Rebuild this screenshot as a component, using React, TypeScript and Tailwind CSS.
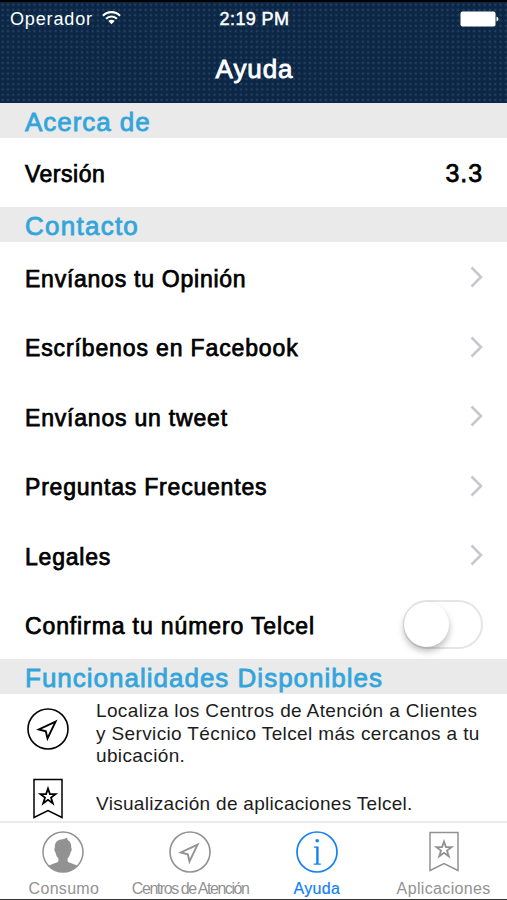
import type { ReactNode } from "react";
import clsx from "clsx";

const contactRows = [
  { label: "Envíanos tu Opinión", className: "tracking-[0.75px]" },
  { label: "Escríbenos en Facebook", className: "tracking-[0.87px]" },
  { label: "Envíanos un tweet", className: "tracking-[0.8px]" },
  { label: "Preguntas Frecuentes", className: "tracking-[0.8px]" },
  { label: "Legales", className: "tracking-[0.8px]" },
];

function SectionHeader({ children, className }: { children: ReactNode; className?: string }) {
  return (
    <h2
      className={clsx(
        "flex shrink-0 items-center bg-[#eaeaea] pl-[25px] text-[26px] leading-none text-[#34a5da] [-webkit-text-stroke:0.8px_#34a5da]",
        className,
      )}
    >
      {children}
    </h2>
  );
}

function Row({ label, className, children }: { label: string; className?: string; children?: ReactNode }) {
  return (
    <div className="flex h-[69.5px] shrink-0 items-center justify-between pr-[24px] pl-[25px] text-[23px] text-black">
      <span className={clsx("pt-[5px] leading-none [-webkit-text-stroke:0.75px_black]", className)}>{label}</span>
      {children}
    </div>
  );
}

function Chevron() {
  return (
    <svg className="mt-px h-[22px] w-[13px]" viewBox="0 0 13 22" fill="none" stroke="#c7c7cc" strokeWidth="2.6">
      <path d="M1.5 1.5 11 11 1.5 20.5" />
    </svg>
  );
}

function LocationIcon() {
  return (
    <svg className="size-[42px]" viewBox="0 0 42 42" fill="none" stroke="currentColor" strokeWidth="1.6">
      <circle cx="21" cy="21" r="20" />
      <path d="M28.6 13.6 11.8 21.5l7 1.8 1.7 7.1z" strokeWidth="1.9" />
    </svg>
  );
}

function BookmarkIcon() {
  return (
    <svg className="h-[42px] w-[30px]" viewBox="0 0 30 42" fill="none" stroke="currentColor" strokeWidth="1.5">
      <path d="M1 1.5h28v38L15 32.5 1 39.5z" />
      <path
        d="M15 10.5l1.9 5.6h5.7l-4.6 3.5 1.8 5.7-4.8-3.5-4.8 3.5 1.8-5.7-4.6-3.5h5.7z"
        strokeWidth="1.8"
      />
    </svg>
  );
}

function PersonIcon() {
  return (
    <svg className="size-[42px]" viewBox="0 0 42 42" fill="none" stroke="currentColor" strokeWidth="1.5">
      <circle cx="21" cy="21" r="20" />
      <path
        d="M12.9 17C12.4 12 15 9 19 8.4c2.300-.3 4.400-.6 6.300-1.900-.3 1.200 0 2 .7 2.700C28.800 10.800 29.500 13.500 29.200 17c.9.6.6 3-.6 4.200-.6 2.800-1.600 4.900-3 6.200V30c0 2.100 6.400 2.400 9.700 5-7.700 7.900-20.900 7.900-28.600 0 3.300-2.600 9.700-2.900 9.700-5v-2.600c-1.400-1.300-2.400-3.400-3-6.200-1.200-1.200-1.500-3.600-.5-4.200z"
        fill="currentColor"
        stroke="none"
      />
    </svg>
  );
}

function InfoIcon() {
  return (
    <svg className="size-[42px]" viewBox="0 0 42 42" fill="none" stroke="currentColor" strokeWidth="1.7">
      <circle cx="21" cy="21" r="20" />
      <circle cx="21.2" cy="9.8" r="1.8" fill="currentColor" stroke="none" />
      <path d="M18 16.2h3.7M17.8 33.2h7" strokeWidth="1.3" />
      <path d="M21.4 15.6v17.4" strokeWidth="2.4" />
    </svg>
  );
}

const tabs = [
  { label: "Consumo", icon: <PersonIcon />, className: "pl-px tracking-[0.3px]" },
  { label: "Centros de Atención", icon: <LocationIcon />, className: "tracking-[-1.45px]" },
  { label: "Ayuda", icon: <InfoIcon />, className: "tracking-[0.3px]", active: true },
  { label: "Aplicaciones", icon: <BookmarkIcon />, className: "tracking-[0.35px]" },
];

function StatusBar() {
  return (
    <div className="grid h-[34px] grid-cols-3 items-center pr-[8px] pl-[10px] text-[18px] leading-none">
      <div className="flex items-center gap-[9px]">
        <span className="tracking-[0.85px]">Operador</span>
        <svg className="-mt-[3px] h-[15px] w-[19px]" viewBox="0 0 20 15" fill="none" stroke="white" strokeWidth="2.2">
          <path d="M1 5.6a12.6 12.6 0 0 1 18 0M4.3 8.9a8 8 0 0 1 11.4 0" />
          <path d="M10 14.5 6.7 11.2a4.7 4.7 0 0 1 6.6 0z" fill="white" stroke="none" />
        </svg>
      </div>
      <span className="text-center tracking-[0.4px] [-webkit-text-stroke:0.5px_white]">2:19 PM</span>
      <svg className="-mt-px h-[16px] w-[39px] justify-self-end" viewBox="0 0 39 16" fill="white">
        <rect x="0.5" y="0.5" width="35" height="15" rx="2" />
        <path d="M36.5 5.5q2 1 2 2.5t-2 2.5z" />
      </svg>
    </div>
  );
}

export default function App() {
  return (
    <div className="flex h-[900px] w-[507px] flex-col overflow-hidden border-b border-[#333] bg-white font-['Liberation_Sans',Arial,sans-serif]">
      <header className="h-[103px] shrink-0 border-t-2 border-black bg-[#0b2745] bg-[radial-gradient(circle,#233f5d_0.7px,transparent_1.7px)] bg-size-[5.3px_5.3px] text-white">
        <StatusBar />
        <h1 className="pt-[20px] pl-[2px] text-center text-[26px] leading-none tracking-[0.9px] [-webkit-text-stroke:0.8px_white]">
          Ayuda
        </h1>
      </header>

      <main className="flex min-h-0 flex-1 flex-col overflow-hidden">
        <SectionHeader className="h-[34.5px] pt-[3px] tracking-[0.95px]">Acerca de</SectionHeader>
        <Row label="Versión" className="tracking-[0.5px]">
          <span className="pt-[2px] text-[25px] tracking-[0.9px] [-webkit-text-stroke:0.75px_black]">3.3</span>
        </Row>
        <SectionHeader className="h-[35px] pt-[3px] tracking-[1.25px]">Contacto</SectionHeader>
        {contactRows.map((row) => (
          <Row key={row.label} {...row}>
            <Chevron />
          </Row>
        ))}
        <Row label="Confirma tu número Telcel" className="tracking-[0.88px]">
          <div className="mt-px h-[49px] w-[80px] rounded-full border-2 border-[#e5e5e5]">
            <div className="-ml-px size-[45px] rounded-full bg-white shadow-[0_4px_7px_rgba(0,0,0,0.28)]" />
          </div>
        </Row>
        <SectionHeader className="h-[35px] pt-[3px] tracking-[1px]">Funcionalidades Disponibles</SectionHeader>

        <div className="flex shrink-0 pt-[6px] pl-[27px] text-[19px] leading-[22.5px] text-[#1c1c1c]">
          <div className="w-[69px] pt-[8px] text-black">
            <LocationIcon />
          </div>
          <p className="tracking-[0.37px] whitespace-nowrap">
            Localiza los Centros de Atención a Clientes
            <br />
            y Servicio Técnico Telcel más cercanos a tu
            <br />
            ubicación.
          </p>
        </div>
        <div className="flex shrink-0 pt-[10px] pl-[33px] text-[19px] leading-[22.5px] text-[#1c1c1c]">
          <div className="w-[63px] text-black">
            <BookmarkIcon />
          </div>
          <p className="pt-[15px] tracking-[0.3px]">Visualización de aplicaciones Telcel.</p>
        </div>
      </main>

      <nav className="grid h-[78px] shrink-0 grid-cols-4 border-t-2 border-[#ebebeb] bg-white">
        {tabs.map((tab) => (
          <button
            key={tab.label}
            className={clsx(
              "flex flex-col items-center pt-[8px] text-[16px] leading-none",
              tab.active ? "text-[#1281f5] [-webkit-text-stroke:0.2px_#1281f5]" : "text-[#929292]",
            )}
          >
            {tab.icon}
            <span className={clsx("pt-[8px] whitespace-nowrap", tab.className)}>{tab.label}</span>
          </button>
        ))}
      </nav>
    </div>
  );
}
